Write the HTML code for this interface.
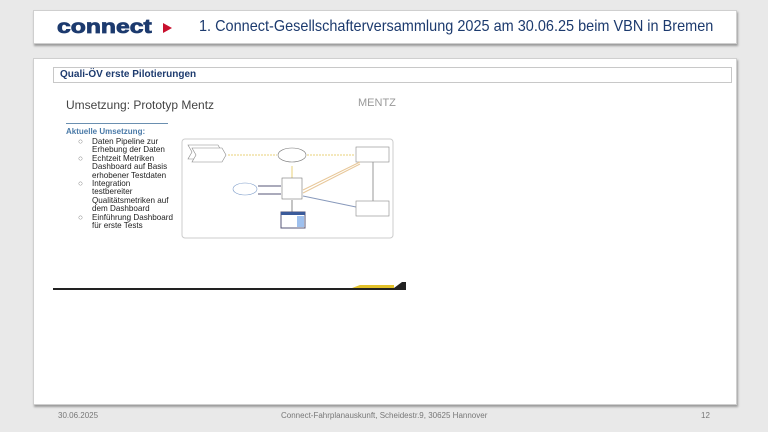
<!DOCTYPE html>
<html><head><meta charset="utf-8"><style>
*{margin:0;padding:0;box-sizing:border-box}
body{width:768px;height:432px;background:#e9e9e9;position:relative;overflow:hidden;font-family:"Liberation Sans",sans-serif}
.hdr{position:absolute;left:33px;top:10px;width:704px;height:34px;background:#fff;border:1px solid #cfcfcf;box-shadow:1px 2px 2px #9a9a9a}
.logo{position:absolute;left:23px;top:6px;font:900 19px "Liberation Sans",sans-serif;color:#1c3a6e;transform:scaleX(1.3);transform-origin:0 0;letter-spacing:0px;-webkit-text-stroke:0.8px #1c3a6e}
.tri{position:absolute;left:129px;top:12px;width:0;height:0;border-left:9px solid #c8102e;border-top:5px solid transparent;border-bottom:5px solid transparent}
.ttl{position:absolute;left:165px;top:7px;font-size:16px;color:#1c3a6e;white-space:nowrap;transform:scaleX(0.905);transform-origin:0 0}
.panel{position:absolute;left:33px;top:58px;width:704px;height:347px;background:#fff;border:1px solid #cfcfcf;box-shadow:1px 2px 2px #9a9a9a}
.bar{position:absolute;left:19px;top:8px;width:679px;height:16px;border:1px solid #c8c8c8}
.bar span{position:absolute;left:6px;top:1px;font:bold 10px "Liberation Sans",sans-serif;color:#1c3a6e}
.foot{position:absolute;top:411px;font-size:8px;color:#777}
.s{position:absolute;color:#333}
</style></head><body>
<div class="hdr"><div class="logo">connect</div><div class="tri"></div><div class="ttl">1. Connect-Gesellschafterversammlung 2025 am 30.06.25 beim VBN in Bremen</div></div>
<div class="panel"><div class="bar"><span>Quali-ÖV erste Pilotierungen</span></div></div>
<div class="s" style="left:66px;top:98px;font-size:12px;color:#444">Umsetzung: Prototyp Mentz</div>
<div class="s" style="left:358px;top:97px;font-size:11px;color:#999;letter-spacing:0px">MENTZ</div>
<div style="position:absolute;left:66px;top:123px;width:102px;height:1px;background:#6a8fb0"></div>
<div class="s" style="left:66px;top:127px;font-size:8px;font-weight:bold;color:#4a7aa8">Aktuelle Umsetzung:</div>
<div class="s" style="left:78px;top:138px;font-size:8.1px;line-height:8.4px;color:#222;width:110px">
<div style="display:flex"><span style="width:14px;color:#777">○</span><span>Daten Pipeline zur<br>Erhebung der Daten</span></div>
<div style="display:flex"><span style="width:14px;color:#777">○</span><span>Echtzeit Metriken<br>Dashboard auf Basis<br>erhobener Testdaten</span></div>
<div style="display:flex"><span style="width:14px;color:#777">○</span><span>Integration<br>testbereiter<br>Qualitätsmetriken auf<br>dem Dashboard</span></div>
<div style="display:flex"><span style="width:14px;color:#777">○</span><span>Einführung Dashboard<br>für erste Tests</span></div>
</div>
<svg style="position:absolute;left:0;top:0" width="768" height="432">
<rect x="182" y="139" width="211" height="99" rx="3" fill="#fff" stroke="#ccc"/>
<path d="M188 145h30l4 7-4 7h-30l4-7z" fill="#fff" stroke="#888" stroke-width=".6"/>
<path d="M192 148h30l4 7-4 7h-30l4-7z" fill="#fff" stroke="#888" stroke-width=".6"/>
<line x1="228" y1="155" x2="277" y2="155" stroke="#e8d27a" stroke-dasharray="2 1"/>
<ellipse cx="292" cy="155" rx="14" ry="7" fill="#fff" stroke="#777" stroke-width=".6"/>
<line x1="307" y1="155" x2="355" y2="155" stroke="#e8d27a" stroke-dasharray="2 1"/>
<rect x="356" y="147" width="33" height="15" fill="#fff" stroke="#888" stroke-width=".6"/>
<line x1="292" y1="166" x2="292" y2="178" stroke="#e8d27a"/>
<rect x="282" y="178" width="20" height="21" fill="#fff" stroke="#777" stroke-width=".6"/>
<line x1="303" y1="190" x2="360" y2="162" stroke="#e8c89a"/>
<line x1="303" y1="193" x2="360" y2="164" stroke="#e8c89a"/>
<ellipse cx="245" cy="189" rx="12" ry="6" fill="#fff" stroke="#7a9ac8" stroke-width=".6"/>
<line x1="258" y1="186" x2="281" y2="186" stroke="#557"/>
<line x1="258" y1="194" x2="281" y2="194" stroke="#557"/>
<line x1="292" y1="200" x2="292" y2="212" stroke="#888"/>
<rect x="281" y="212" width="24" height="16" fill="#fff" stroke="#557"/>
<rect x="281" y="212" width="24" height="3" fill="#3a5a9a"/>
<rect x="297" y="216" width="7" height="11" fill="#9ec0ee"/>
<line x1="303" y1="196" x2="356" y2="207" stroke="#8899bb"/>
<rect x="356" y="201" width="33" height="15" fill="#fff" stroke="#888" stroke-width=".6"/>
<line x1="373" y1="162" x2="373" y2="201" stroke="#999"/>
<rect x="53" y="288" width="353" height="2" fill="#222"/>
<path d="M352 288l8-3h34v3z" fill="#e2c12a"/>
<path d="M394 288l8-6h4v6z" fill="#222"/>
</svg>
<div class="foot" style="left:58px">30.06.2025</div>
<div class="foot" style="left:281px">Connect-Fahrplanauskunft, Scheidestr.9, 30625 Hannover</div>
<div class="foot" style="left:701px">12</div>
</body></html>
